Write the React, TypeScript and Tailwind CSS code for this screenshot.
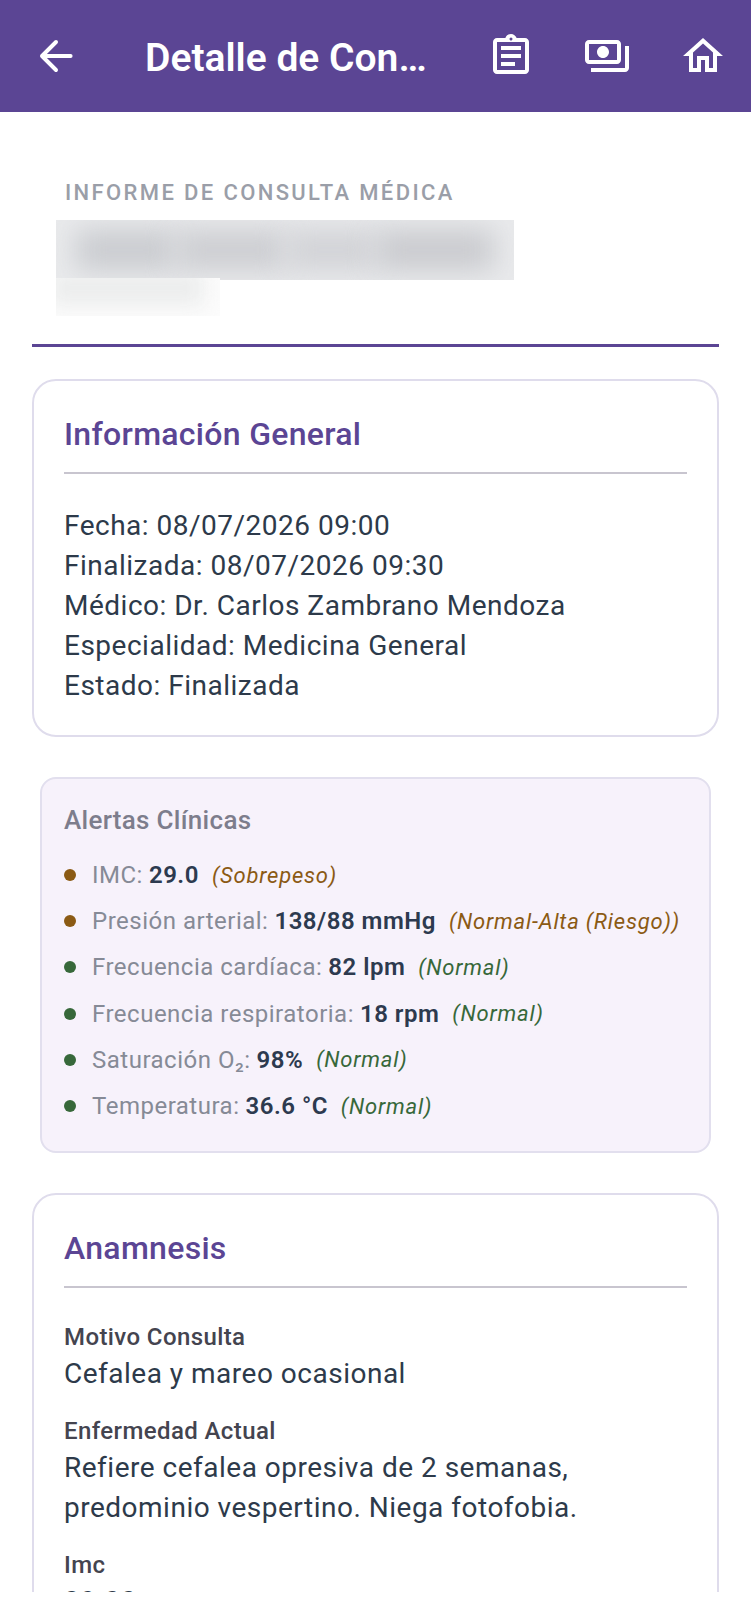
import React from "react";

function Header() {
  return (
    <header className="h-[112px] bg-[#5b4594] flex items-center text-white">
      <div className="w-[112px] flex justify-center shrink-0">
        <svg viewBox="0 0 24 24" className="w-12 h-12" fill="none" stroke="white" strokeWidth="2" strokeLinecap="round" strokeLinejoin="round">
          <path d="M19.3 12H5M12 5l-7 7 7 7" />
        </svg>
      </div>
      <h1 className="ml-[33px] pt-[3px] w-[294px] truncate text-[39px] font-semibold leading-[48px] shrink-0">
        Detalle de Consulta
      </h1>
      <div className="ml-auto flex">
        <div className="w-24 flex justify-center">
          <svg viewBox="0 0 24 24" className="w-12 h-12" fill="white">
            <path d="M19 3h-4.18C14.4 1.84 13.3 1 12 1s-2.4.84-2.82 2H5c-1.1 0-2 .9-2 2v14c0 1.1.9 2 2 2h14c1.1 0 2-.9 2-2V5c0-1.1-.9-2-2-2zm-7-.25c.22 0 .41.1.55.25.12.13.2.31.2.5 0 .41-.34.75-.75.75s-.75-.34-.75-.75c0-.19.08-.37.2-.5.14-.15.33-.25.55-.25zM19 19H5V5h14v14zM7 7h10v2H7zm0 4h10v2H7zm0 4h7v2H7z" />
          </svg>
        </div>
        <div className="w-24 flex justify-center">
          <svg viewBox="0 0 24 24" className="w-12 h-12" fill="white">
            <path d="M19 14V6c0-1.1-.9-2-2-2H3c-1.1 0-2 .9-2 2v8c0 1.1.9 2 2 2h14c1.1 0 2-.9 2-2zm-2 0H3V6h14v8zm-7-7c-1.66 0-3 1.34-3 3s1.34 3 3 3 3-1.34 3-3-1.34-3-3-3zm13 0v11c0 1.1-.9 2-2 2H4v-2h17V7h2z" />
          </svg>
        </div>
        <div className="w-24 flex justify-center">
          <svg viewBox="0 0 24 24" className="w-12 h-12" fill="white">
            <path d="M12 5.69l5 4.5V18h-2v-6H9v6H7v-7.81l5-4.5M12 3L2 12h3v8h6v-6h2v6h6v-8h3L12 3z" />
          </svg>
        </div>
      </div>
    </header>
  );
}

function Card({ title, children }: { title: string; children: React.ReactNode }) {
  return (
    <section className="border-2 border-[#dfdcec] rounded-[24px] px-[30px] pt-[30px] pb-[29px] bg-white">
      <h2 className="text-[32px] leading-[46px] tracking-[0.3px] font-medium text-[#5b4594]">{title}</h2>
      <div className="h-[2px] bg-[#c8c5cf] mt-[15px] mb-[32px]" />
      {children}
    </section>
  );
}

const vitals = [
  { label: "IMC: ", value: "29.0", note: "(Sobrepeso)", warn: true },
  { label: "Presión arterial: ", value: "138/88 mmHg", note: "(Normal-Alta (Riesgo))", warn: true },
  { label: "Frecuencia cardíaca: ", value: "82 lpm", note: "(Normal)", warn: false },
  { label: "Frecuencia respiratoria: ", value: "18 rpm", note: "(Normal)", warn: false },
  { label: "Saturación O₂: ", value: "98%", note: "(Normal)", warn: false },
  { label: "Temperatura: ", value: "36.6 °C", note: "(Normal)", warn: false },
];

function Alerts() {
  return (
    <section className="mx-2 mt-10 border-2 border-[#e2dfee] rounded-[16px] bg-[#f7f2fb] px-[22px] pt-[23px] pb-[22px]">
      <h3 className="text-[26px] leading-[36px] tracking-[0.3px] font-medium text-[#7d7d8c]">Alertas Clínicas</h3>
      <ul className="mt-[14px]">
        {vitals.map((v) => (
          <li key={v.label} className="flex items-center h-[46.2px] text-[24px] tracking-[0.5px] whitespace-nowrap">
            <span className={v.warn ? "w-3 h-3 rounded-full bg-[#8b5a14] shrink-0" : "w-3 h-3 rounded-full bg-[#37683a] shrink-0"} />
            <span className="ml-4 text-[#868a96]">{v.label}</span>
            <span className="ml-[6px] font-semibold text-[#2d3a4f]">{v.value}</span>
            <span className={v.warn ? "ml-[13px] text-[22px] tracking-[0.8px] italic text-[#8b5a14]" : "ml-[13px] text-[22px] tracking-[0.8px] italic text-[#37683a]"}>{v.note}</span>
          </li>
        ))}
      </ul>
    </section>
  );
}

function Field({ label, value }: { label: string; value: React.ReactNode }) {
  return (
    <div className="mb-[20px]">
      <div className="text-[24px] leading-[34px] tracking-[0.4px] font-medium text-[#44444f]">{label}</div>
      <div className="text-[28px] leading-[40px] tracking-[0.5px] text-[#2d3a4a]">{value}</div>
    </div>
  );
}

export default function App() {
  return (
    <div className="h-[1592px] overflow-hidden bg-white font-['Roboto',sans-serif]">
      <Header />
      <main className="px-8">
        <div className="border-b-[3px] border-[#5b4594] h-[235px] pt-[68px]">
          <p className="ml-[33px] text-[22px] leading-[26px] tracking-[2.37px] font-medium text-[#9a9ea8]">
            INFORME DE CONSULTA MÉDICA
          </p>
          <div className="ml-6 mt-[14px] w-[458px] h-[60px] bg-[#e9eaec] overflow-hidden flex items-center px-5">
            <div className="h-10 w-[100px] bg-[#c9cbcf] blur-[14px]" />
            <div className="h-10 w-[110px] bg-[#cccdd1] blur-[14px]" />
            <div className="h-10 w-[90px] bg-[#d1d2d6] blur-[14px]" />
            <div className="h-10 w-[118px] bg-[#c9cace] blur-[14px]" />
          </div>
          <div className="ml-6 -mt-[2px] w-[164px] h-[38px] overflow-hidden bg-[#fcfcfc] relative">
            <div className="-mt-2 -ml-2 h-[36px] w-[156px] bg-[#eceded] blur-[10px]" />
          </div>
        </div>

        <div className="mt-[32px]">
          <Card title="Información General">
            <div className="text-[28px] leading-[40px] tracking-[0.5px] text-[#2d3a4a]">
              <div>Fecha: 08/07/2026 09:00</div>
              <div>Finalizada: 08/07/2026 09:30</div>
              <div>Médico: Dr. Carlos Zambrano Mendoza</div>
              <div>Especialidad: Medicina General</div>
              <div>Estado: Finalizada</div>
            </div>
          </Card>
        </div>

        <Alerts />

        <div className="mt-[40px]">
          <Card title="Anamnesis">
            <Field label="Motivo Consulta" value="Cefalea y mareo ocasional" />
            <Field
              label="Enfermedad Actual"
              value={
                <>
                  Refiere cefalea opresiva de 2 semanas,
                  <br />
                  predominio vespertino. Niega fotofobia.
                </>
              }
            />
            <Field label="Imc" value="29.00" />
          </Card>
        </div>
      </main>
    </div>
  );
}
